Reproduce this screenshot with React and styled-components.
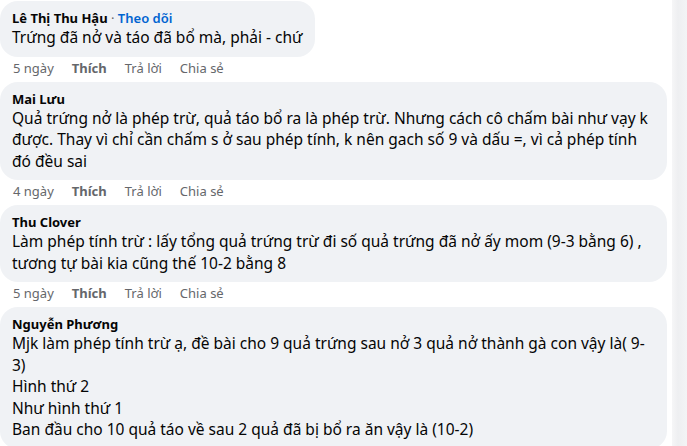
import React from 'react'
import styled, { createGlobalStyle } from 'styled-components'

const Global = createGlobalStyle`
  html, body {
    margin: 0;
    padding: 0;
    background: #ffffff;
    overflow: hidden;
  }
  body {
    font-family: "Noto Sans", "Open Sans", sans-serif;
    color: #050505;
  }
`

const Page = styled.div`
  display: flex;
  width: 687px;
  height: 446px;
  overflow: hidden;
`

const Feed = styled.div`
  flex: 1;
  display: flex;
  flex-direction: column;
  padding: 1px 5px 0 0;
`

const ScrollTrack = styled.div`
  width: 15px;
  flex: none;
  background: linear-gradient(to right, #f6f6f7, #eeeff1 40%, #f3f4f5);
`

const Comment = styled.div`
  display: flex;
  flex-direction: column;
  align-items: flex-start;
`

const Bubble = styled.div`
  background: #f0f2f5;
  border-radius: 18px;
  padding: 8px 12px 8px 12px;
  box-sizing: border-box;
  width: ${p => (p.$full ? '667px' : 'auto')};
`

const Author = styled.div`
  font-size: 13px;
  font-weight: 700;
  line-height: 18px;
  white-space: nowrap;
`

const Follow = styled.span`
  font-weight: 600;
  color: #0064d1;
`

const Dot = styled.span`
  font-weight: 400;
  color: #65676b;
`

const Body = styled.div`
  font-size: 15.5px;
  line-height: 21.5px;
  white-space: nowrap;
`

const Actions = styled.div`
  display: flex;
  gap: 18px;
  padding: 3px 0 0 13px;
  height: 25px;
  box-sizing: border-box;
  font-size: 13px;
  line-height: 16px;
  color: #65676b;
`

const Action = styled.span`
  font-weight: ${p => (p.$bold ? 700 : 400)};
`

const comments = [
  {
    name: 'Lê Thị Thu Hậu',
    follow: true,
    time: '5 ngày',
    lines: ['Trứng đã nở và táo đã bổ mà, phải - chứ'],
  },
  {
    name: 'Mai Lưu',
    time: '4 ngày',
    full: true,
    lines: [
      'Quả trứng nở là phép trừ, quả táo bổ ra là phép trừ. Nhưng cách cô chấm bài như vạy k',
      'được. Thay vì chỉ cần chấm s ở sau phép tính, k nên gach số 9 và dấu =, vì cả phép tính',
      'đó đều sai',
    ],
  },
  {
    name: 'Thu Clover',
    time: '5 ngày',
    full: true,
    lines: [
      'Làm phép tính trừ : lấy tổng quả trứng trừ đi số quả trứng đã nở ấy mom (9-3 bằng 6) ,',
      'tương tự bài kia cũng thế 10-2 bằng 8',
    ],
  },
  {
    name: 'Nguyễn Phương',
    full: true,
    lines: [
      'Mjk làm phép tính trừ ạ, đề bài cho 9 quả trứng sau nở 3 quả nở thành gà con vậy là( 9-',
      '3)',
      'Hình thứ 2',
      'Như hình thứ 1',
      'Ban đầu cho 10 quả táo về sau 2 quả đã bị bổ ra ăn vậy là (10-2)',
    ],
  },
]

export default function App() {
  return (
    <Page>
      <Global />
      <Feed>
        {comments.map(c => (
          <Comment key={c.name}>
            <Bubble $full={c.full}>
              <Author>
                {c.name}
                {c.follow && (
                  <>
                    <Dot> · </Dot>
                    <Follow>Theo dõi</Follow>
                  </>
                )}
              </Author>
              {c.lines.map((l, i) => (
                <Body key={i}>{l}</Body>
              ))}
            </Bubble>
            {c.time && (
              <Actions>
                <Action>{c.time}</Action>
                <Action $bold>Thích</Action>
                <Action>Trả lời</Action>
                <Action>Chia sẻ</Action>
              </Actions>
            )}
          </Comment>
        ))}
      </Feed>
      <ScrollTrack />
    </Page>
  )
}
